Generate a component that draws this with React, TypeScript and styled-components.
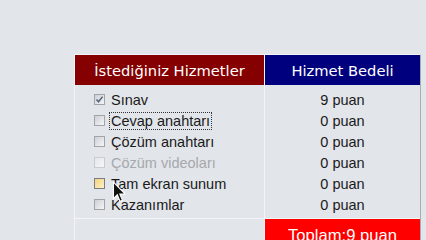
import styled, { createGlobalStyle, css } from "styled-components";

const GlobalStyle = createGlobalStyle`
    html, body {
        margin: 0;
        padding: 0;
        background: #e2e5ea;
        overflow: hidden;
    }
`;

type Service = {
    name: string;
    points: number;
    checked?: boolean;
    disabled?: boolean;
    hover?: boolean;
    focused?: boolean;
};

const services: Service[] = [
    { name: "Sınav", points: 9, checked: true },
    { name: "Cevap anahtarı", points: 0, focused: true },
    { name: "Çözüm anahtarı", points: 0 },
    { name: "Çözüm videoları", points: 0, disabled: true },
    { name: "Tam ekran sunum", points: 0, hover: true },
    { name: "Kazanımlar", points: 0 },
];

const Page = styled.div`
    position: relative;
    width: 426px;
    height: 240px;
    padding: 54px 0 0 74px;
    box-sizing: border-box;
    font-family: "Liberation Sans", Arial, sans-serif;
`;

const Table = styled.div`
    display: grid;
    grid-template-columns: 189px 155px;
    column-gap: 1px;
    width: 347px;
    background: #f2f4f7;
    border: 1px solid #f2f4f7;
    border-right: 1px solid #a9acb2;
    border-bottom: none;
    box-sizing: border-box;
`;

const HeaderCell = styled.div<{ $tone: "red" | "blue" }>`
    height: 30px;
    display: flex;
    align-items: center;
    justify-content: center;
    color: #ffffff;
    font-family: "DejaVu Sans", Verdana, sans-serif;
    font-size: 14.7px;
    background: ${(p) => (p.$tone === "red" ? "#850000" : "#00007f")};
`;

const BodyCell = styled.div<{ $align: "left" | "center" }>`
    display: flex;
    flex-direction: column;
    padding: 4px 0 3px ${(p) => (p.$align === "left" ? "19px" : "0")};
    align-items: ${(p) => (p.$align === "left" ? "flex-start" : "center")};
    background: #e2e5ea;
    border-bottom: 1px solid #f2f4f7;
`;

const Row = styled.div`
    height: 21px;
    display: flex;
    align-items: center;
    gap: 4px;
    font-size: 14.5px;
    color: #1a1a1a;
`;

const Box = styled.span<{ $checked?: boolean; $disabled?: boolean; $hover?: boolean }>`
    position: relative;
    width: 11px;
    height: 11px;
    box-sizing: border-box;
    border: 1px solid #a2a4a8;
    background: linear-gradient(135deg, #cdd0d5, #f4f5f7);
    ${(p) =>
        p.$disabled &&
        css`
            border-color: #c9cbcf;
            background: linear-gradient(135deg, #e4e6e9, #f5f6f8);
        `}
    ${(p) =>
        p.$hover &&
        css`
            border-color: #7b7d82;
            background: linear-gradient(135deg, #f5d37e, #fdf0c8);
        `}
    svg {
        position: absolute;
        left: 0;
        top: 0;
    }
`;

const Label = styled.span<{ $disabled?: boolean; $focused?: boolean }>`
    padding: 0 1px;
    line-height: 16px;
    border: 1px dotted transparent;
    color: ${(p) => (p.$disabled ? "#a6a8ad" : "#1a1a1a")};
    ${(p) =>
        p.$focused &&
        css`
            border-color: #333333;
        `}
`;

const FooterBlank = styled.div`
    height: 30px;
    background: #e2e5ea;
`;

const FooterTotal = styled.div`
    height: 30px;
    padding-top: 7px;
    box-sizing: border-box;
    text-align: center;
    background: #fe0000;
    color: #ffffff;
    font-size: 16.6px;
    line-height: 19px;
`;

const Cursor = styled.svg`
    position: absolute;
    left: 112px;
    top: 181px;
`;

const Check = () => (
    <svg width="9" height="9" viewBox="0 0 9 9">
        <path d="M1.5 4.5 L3.5 6.8 L7.6 1.6" fill="none" stroke="#56627a" strokeWidth="1.5" />
    </svg>
);

export default function App() {
    return (
        <Page>
            <GlobalStyle />
            <Table>
                <HeaderCell $tone="red">İstediğiniz Hizmetler</HeaderCell>
                <HeaderCell $tone="blue">Hizmet Bedeli</HeaderCell>
                <BodyCell $align="left">
                    {services.map((s) => (
                        <Row key={s.name}>
                            <Box $checked={s.checked} $disabled={s.disabled} $hover={s.hover}>
                                {s.checked && <Check />}
                            </Box>
                            <Label $disabled={s.disabled} $focused={s.focused}>
                                {s.name}
                            </Label>
                        </Row>
                    ))}
                </BodyCell>
                <BodyCell $align="center">
                    {services.map((s) => (
                        <Row key={s.name}>{s.points} puan</Row>
                    ))}
                </BodyCell>
                <FooterBlank />
                <FooterTotal>Toplam:9 puan</FooterTotal>
            </Table>
            <Cursor width="15" height="22" viewBox="0 0 13 20">
                <path
                    d="M1 1 L1 16 L4.5 12.5 L7 18.5 L9.2 17.6 L6.8 11.8 L11.5 11.8 Z"
                    fill="#111111"
                    stroke="#ffffff"
                    strokeWidth="1"
                />
            </Cursor>
        </Page>
    );
}
